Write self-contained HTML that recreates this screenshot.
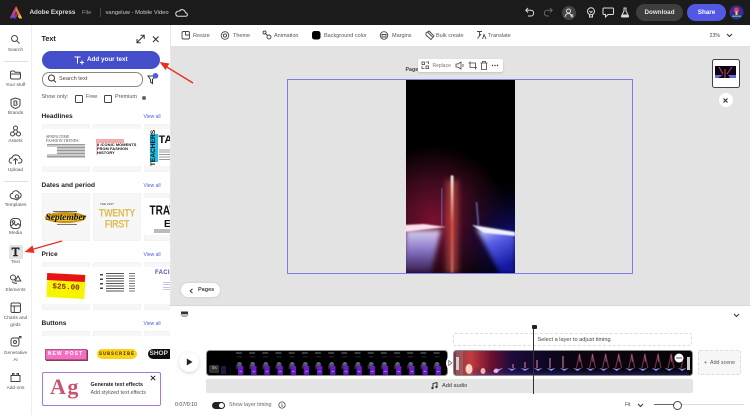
<!DOCTYPE html>
<html><head><meta charset="utf-8"><style>
html,body{margin:0;padding:0;width:750px;height:415px;overflow:hidden;background:#fff;font-family:"Liberation Sans",sans-serif;color:#333}
#r{position:relative;width:750px;height:415px;overflow:hidden;filter:blur(.3px)}
.a{position:absolute}
.t{position:absolute;white-space:nowrap;line-height:8px;font-size:5.6px;color:#555}
.c{transform:translateX(-50%);text-align:center}
.h{font-weight:700;font-size:6.6px;color:#222}
.v{font-size:5px;color:#5258e4}
.card{position:absolute;background:#f7f7f7;border-radius:2px;overflow:hidden;box-shadow:inset 0 0 0 .5px #eee}
svg{position:absolute;overflow:visible}
.i{fill:none;stroke:#444;stroke-width:1}
.w{fill:none;stroke:#ddd;stroke-width:1}
</style></head><body><div id="r">
<!-- top bar -->
<div class="a" style="left:0;top:0;width:750px;height:25px;background:#1b1b1b"></div>
<svg style="left:9px;top:6px" width="14" height="13" viewBox="0 0 14 13"><path d="M7 0L1 11.5H4.5L7 5Z" fill="#e8416a"/><path d="M7 0L13 11.5H10L7 5Z" fill="#f0782a"/><path d="M4 12.5L7 6.5L8.5 9.5L6.5 12.5Z" fill="#3c4fe0"/><path d="M1 12.5L3.6 7.5H5L2.5 12.5Z" fill="#7a3ce0"/><path d="M8.8 10L10.2 12.5H13L11.4 9Z" fill="#f6c12a"/></svg>
<div class="t" style="left:29.5px;top:8.5px;color:#ddd;font-size:6.3px;font-weight:700">Adobe Express</div>
<div class="t" style="left:82px;top:8.5px;color:#999;font-size:5.8px">File</div>
<div class="a" style="left:99.5px;top:8px;width:1px;height:9px;background:#444"></div>
<div class="t" style="left:105.5px;top:8.5px;color:#ccc;font-size:5.8px">vangeluw - Mobile Video</div>
<svg style="left:175px;top:8px" width="13" height="9" viewBox="0 0 13 9"><path class="w" d="M3 8.3H10.5C13 8.3 13 5 10.5 4.8C10 1.5 6 .5 4.8 3C2.5 2.8 .5 4 .8 6C1 7.5 2 8.3 3 8.3Z"/></svg>
<svg style="left:525px;top:7px" width="28" height="11" viewBox="0 0 28 11"><path class="w" d="M3 1L.8 3.3L3 5.5M1 3.3H6C9.5 3.3 9.5 9 6 9H3"/><path d="M25 1L27.2 3.3L25 5.5M27 3.3H22C18.5 3.3 18.5 9 22 9H24" fill="none" stroke="#666" stroke-width="1"/></svg>
<div class="a" style="left:562px;top:6px;width:14px;height:14px;border-radius:50%;background:#444"></div>
<svg style="left:564px;top:8px" width="10" height="10" viewBox="0 0 10 10"><circle class="w" cx="4.5" cy="3" r="2"/><path class="w" d="M1 9C1.5 6 3 5.5 4.5 5.5C6 5.5 7 6.5 7.5 8M8 6V9.5M6.5 8H9.5"/></svg>
<svg style="left:586px;top:7px" width="10" height="11" viewBox="0 0 10 11"><circle class="w" cx="5" cy="4.3" r="3.5"/><path class="w" d="M3.5 8V10H6.5V8M3.5 4L5 5.5L6.5 4"/></svg>
<svg style="left:602px;top:7px" width="12" height="11" viewBox="0 0 12 11"><path class="w" d="M2 1H10.5Q11.5 1 11.5 2V6.5Q11.5 7.5 10.5 7.5H6L3.5 10V7.5H2Q1 7.5 1 6.5V2Q1 1 2 1Z"/></svg>
<svg style="left:620px;top:7px" width="10" height="11" viewBox="0 0 10 11"><path class="w" d="M3.5 1H6.5M4 1V4L1.5 9Q1.3 10 2.3 10H7.7Q8.7 10 8.5 9L6 4V1"/><path d="M2.5 7.5H7.5L8 9.5H2Z" fill="#ddd"/></svg>
<div class="a" style="left:636px;top:4px;width:47px;height:17px;border-radius:9px;background:#3e3e3e"></div>
<div class="t c" style="left:659.5px;top:8.5px;color:#e2e2e2;font-size:6.3px;font-weight:700">Download</div>
<div class="a" style="left:687px;top:4px;width:39px;height:17px;border-radius:9px;background:#5258e4"></div>
<div class="t c" style="left:706.5px;top:8.5px;color:#fff;font-size:6.3px;font-weight:700">Share</div>
<svg style="left:729px;top:5px" width="15" height="15" viewBox="0 0 15 15"><circle cx="7.5" cy="7.5" r="7" fill="#3b2a9c"/><circle cx="7.5" cy="5" r="2.5" fill="#e0405a"/><path d="M6.5 6H8.5V10H6.5Z" fill="#f2d24a"/><path d="M3 10.5H12V12H3Z" fill="#35c06a"/></svg>

<!-- left rail -->
<div class="a" style="left:31px;top:25px;width:1px;height:390px;background:#eee"></div>
<div class="a" style="left:4px;top:60.5px;width:24px;height:.7px;background:#ddd"></div>
<div class="a" style="left:4px;top:180.5px;width:24px;height:.7px;background:#ddd"></div>
<div class="a" style="left:9px;top:245px;width:13.5px;height:13.5px;border-radius:2px;background:#e4e4e4"></div>
<svg style="left:0;top:0" width="32" height="415" viewBox="0 0 32 415">
<g class="i">
<circle cx="14.5" cy="38.5" r="3"/><path d="M16.7 40.7L19.5 43.5"/>
<path d="M10.5 72.5Q10.5 71 12 71H14L15 72.3H19Q20.5 72.3 20.5 73.8V77.5Q20.5 79 19 79H12Q10.5 79 10.5 77.5ZM10.5 74H20.5"/>
<path d="M11 99.5L15.5 98L20 99.5V104.5Q20 107 15.5 108.5Q11 107 11 104.5Z"/><path d="M14 101H16.5Q17.5 102.3 16.3 103Q17.8 104 16.5 105.3H14Z"/>
<circle cx="15.5" cy="128" r="2"/><circle cx="12.5" cy="134" r="2"/><circle cx="18.5" cy="134" r="2"/><path d="M14.5 129.7L13.3 132M16.5 129.7L17.7 132M14.5 134H16.5"/>
<path d="M12 163H10.8Q8.5 162.5 9.5 159.5Q10.5 157.5 12 158Q13 154.5 16.5 155Q19.5 155.5 20 158.5Q22.5 159 21.8 161.5Q21.3 163 19.5 163H18M15.5 164.5V158.5M13.3 160.5L15.5 158.5L17.7 160.5"/>
<path d="M12 198.5C9 197 10 193 12.5 193.5C13 190 18 190 19 193C21.5 193 22 196.5 19.5 198L17 200L15 199Z"/><circle cx="17" cy="196.5" r="1.7"/>
<rect x="10.5" y="218.5" width="10" height="10" rx="3.5"/><circle cx="13.5" cy="222" r="1.3"/><path d="M11 226L14 223.5L16 225.5L18 223.5L20.5 226"/>
<circle cx="13" cy="277.5" r="2.5"/><path d="M15 281L18 276L20.8 281Z"/><path d="M12 281.5Q14 284 17 283"/>
<rect x="11" y="303" width="9.5" height="9.5" rx="1.5"/><path d="M11 306H20.5M14.3 306V312.5"/>
<rect x="11" y="338" width="8" height="8" rx="2"/><circle cx="15" cy="342" r="1.5"/><path d="M18 339L20.5 336.5M19 336.5H21V338.5"/>
<path d="M11 375.5H20V381.5H11ZM12.5 375.5V373.5H14V375.5M17 375.5V373.5H18.5V375.5"/>
</g>
<path d="M11.5 247.5H19.5V249.8H18.5L18 248.8H16.5V255H17.8V256.3H13.2V255H14.5V248.8H13L12.5 249.8H11.5Z" fill="#222"/>
</svg>
<div class="t c" style="left:15.5px;top:46.5px;font-size:4.8px">Search</div>
<div class="t c" style="left:15.5px;top:82px;font-size:4.8px">Your stuff</div>
<div class="t c" style="left:15.5px;top:110px;font-size:4.8px">Brands</div>
<div class="t c" style="left:15.5px;top:138px;font-size:4.8px">Assets</div>
<div class="t c" style="left:15.5px;top:166.5px;font-size:4.8px">Upload</div>
<div class="t c" style="left:15.5px;top:202px;font-size:4.8px">Templates</div>
<div class="t c" style="left:15.5px;top:230px;font-size:4.8px">Media</div>
<div class="t c" style="left:15.5px;top:258.5px;font-size:4.8px">Text</div>
<div class="t c" style="left:15.5px;top:286.5px;font-size:4.8px">Elements</div>
<div class="t c" style="left:15.5px;top:315px;font-size:4.8px">Charts and</div>
<div class="t c" style="left:15.5px;top:321.5px;font-size:4.8px">grids</div>
<div class="t c" style="left:15.5px;top:350px;font-size:4.8px">Generative</div>
<div class="t c" style="left:15.5px;top:356.5px;font-size:4.8px">AI</div>
<div class="t c" style="left:15.5px;top:384.5px;font-size:4.8px">Add-ons</div>

<!-- panel -->
<div class="t" style="left:41.5px;top:35px;font-size:7.2px;font-weight:700;color:#222">Text</div>
<svg style="left:136px;top:34px" width="25" height="10" viewBox="0 0 25 10"><path d="M1 8.5L8 1.5M4.5 1.3H8.2V5M1 5V8.7H4.7" fill="none" stroke="#333" stroke-width="1"/><path d="M17 2.5L22.5 8M22.5 2.5L17 8" fill="none" stroke="#333" stroke-width="1.1"/></svg>
<div class="a" style="left:41.5px;top:51px;width:118.5px;height:18px;border-radius:9px;background:#444ecb"></div>
<svg style="left:74px;top:56px" width="10" height="9" viewBox="0 0 10 9"><path d="M.5 1H6.5M3.5 1V7.5M8 4.5V8.5M6 6.5H10" fill="none" stroke="#fff" stroke-width="1"/></svg>
<div class="t" style="left:87px;top:56px;color:#fff;font-size:6.3px;font-weight:700">Add your text</div>
<div class="a" style="left:42px;top:72px;width:99px;height:12.5px;border-radius:7px;border:.8px solid #888;background:#fff"></div>
<svg style="left:47px;top:74px" width="10" height="10" viewBox="0 0 10 10"><circle cx="4.5" cy="4" r="3" fill="none" stroke="#333"/><path d="M6.7 6.2L9 8.5" stroke="#333"/></svg>
<div class="t" style="left:59px;top:74.5px;font-size:5.6px;color:#444">Search text</div>
<svg style="left:146px;top:73px" width="14" height="12" viewBox="0 0 14 12"><path d="M2 3H9L6.5 6.5V10.5L4.5 9V6.5Z" fill="none" stroke="#333"/><circle cx="9.5" cy="2.8" r="2.8" fill="#5258e4"/></svg>
<div class="t" style="left:41.5px;top:93px;font-size:5.5px;color:#555">Show only:</div>
<div class="a" style="left:74.5px;top:94.5px;width:6px;height:6px;border:.9px solid #444;border-radius:1.2px"></div>
<div class="t" style="left:86px;top:93px;font-size:5.5px;color:#555">Free</div>
<div class="a" style="left:103.5px;top:94.5px;width:6px;height:6px;border:.9px solid #444;border-radius:1.2px"></div>
<div class="t" style="left:115px;top:93px;font-size:5.5px;color:#555">Premium</div>
<div class="a" style="left:141.5px;top:96px;width:4px;height:4px;border-radius:50%;background:#666"></div>

<div class="t h" style="left:41.5px;top:112.5px">Headlines</div><div class="t v" style="left:143.5px;top:113px">View all</div>
<div class="t h" style="left:41.5px;top:181.5px">Dates and period</div><div class="t v" style="left:143.5px;top:181.5px">View all</div>
<div class="t h" style="left:41.5px;top:250.5px">Price</div><div class="t v" style="left:143.5px;top:250.5px">View all</div>
<div class="t h" style="left:41.5px;top:319.5px">Buttons</div><div class="t v" style="left:143.5px;top:319.5px">View all</div>

<!-- headline cards -->
<div class="card" style="left:41.5px;top:124px;width:48px;height:48px"><div class="a" style="left:0;top:5px;width:48px;height:37px;background:#fff"></div>
<div class="t" style="left:4.5px;top:10.5px;font:3.9px/4.2px 'Liberation Serif',serif;color:#555;white-space:normal;width:42px">SPRINGTIME<br>FASHION TRENDS</div>
<div class="a" style="left:5px;top:20px;width:38px;height:14px;background:repeating-linear-gradient(#999 0 .8px,#fff .8px 1.5px)"></div><div class="a" style="left:5px;top:23px;width:10px;height:7px;background:#fff"></div></div>
<div class="card" style="left:93px;top:124px;width:48px;height:48px"><div class="a" style="left:0;top:5px;width:48px;height:37px;background:#fff"></div>
<div class="a" style="left:3px;top:15px;width:28px;height:3.5px;background:#f8a9a9"></div><div class="a" style="left:3px;top:18.5px;width:1.5px;height:12px;background:#fbc9c9"></div>
<div class="t" style="left:4px;top:18.5px;font:700 3.9px/4.1px 'Liberation Sans',sans-serif;color:#111;white-space:normal;width:44px;letter-spacing:.1px">8 ICONIC MOMENTS<br>FROM FASHION<br>HISTORY</div></div>
<div class="card" style="left:144px;top:124px;width:26px;height:48px"><div class="a" style="left:0;top:5px;width:26px;height:37px;background:#fff"></div>
<div class="a" style="left:5.5px;top:10px;width:8px;height:28px;background:#21bfe8"></div>
<div class="t c" style="left:9.5px;top:20px;font:900 6.6px/8px 'Liberation Sans',sans-serif;color:#111;transform:translateX(-50%) rotate(-90deg)">TEACHERS</div>
<div class="t" style="left:14.5px;top:10px;font:700 11px/12px 'Liberation Sans',sans-serif;color:#111">TA</div>
<div class="a" style="left:15px;top:25px;width:11px;height:12px;background:repeating-linear-gradient(#999 0 .7px,#fff .7px 1.7px)"></div></div>
<!-- dates -->
<div class="card" style="left:41.5px;top:193px;width:48px;height:48px">
<div class="a" style="left:3.5px;top:19px;width:41px;height:11px;border-radius:50%;background:#c99512"></div>
<div class="a" style="left:8px;top:21.5px;width:33px;height:6px;border-radius:50%;background:#f3c63a"></div>
<div class="t" style="left:4px;top:20px;font:italic 700 9.6px/9px 'Liberation Serif',serif;color:#111;letter-spacing:-.1px">September</div>
<div class="a" style="left:11px;top:17.5px;width:24px;height:1px;background:#666"></div><div class="a" style="left:15px;top:30.5px;width:20px;height:1px;background:#777"></div></div>
<div class="card" style="left:93px;top:193px;width:48px;height:48px">
<div class="t c" style="left:24px;top:15px;font:700 9px/10px 'Liberation Sans',sans-serif;color:#dcbd55;letter-spacing:-.3px;transform:translateX(-50%) scaleY(1.2)">TWENTY</div>
<div class="t c" style="left:24px;top:25.5px;font:700 9px/10px 'Liberation Sans',sans-serif;color:#dcbd55;letter-spacing:-.3px;transform:translateX(-50%) scaleY(1.2)">FIRST</div>
<div class="t" style="left:7px;top:7px;font-size:3px;color:#333">THE 21ST</div></div>
<div class="card" style="left:144px;top:193px;width:26px;height:48px"><div class="a" style="left:0;top:5px;width:26px;height:37px;background:#fff"></div>
<div class="t" style="left:5.5px;top:11px;font:700 10px/12px 'Liberation Sans',sans-serif;color:#111;transform:scaleY(1.3);transform-origin:0 0">TRAV</div>
<div class="t" style="left:20px;top:26px;font:700 10px/11px 'Liberation Sans',sans-serif;color:#111">E</div><div class="a" style="left:10px;top:36px;width:16px;height:3.5px;background:#bbb"></div></div>
<!-- price -->
<div class="card" style="left:41.5px;top:262px;width:48px;height:48px"><div class="a" style="left:0;top:5px;width:48px;height:37px;background:#fff"></div>
<div class="a" style="left:5px;top:12px;width:38px;height:24px;background:#f7f400;transform:rotate(3deg)"></div>
<div class="a" style="left:5px;top:11.5px;width:38px;height:7px;background:#e81118;transform:rotate(3deg)"></div>
<div class="t c" style="left:24px;top:22px;font:700 7.6px/8px 'Liberation Mono',monospace;color:#8a2a1a;transform:translateX(-50%) rotate(3deg)">$25.00</div></div>
<div class="card" style="left:93px;top:262px;width:48px;height:48px"><div class="a" style="left:0;top:5px;width:48px;height:37px;background:#fff"></div>
<div class="a" style="left:13px;top:11px;width:18px;height:20px;background:repeating-linear-gradient(#555 0 1px,#fff 1px 2.5px)"></div>
<div class="a" style="left:36px;top:11px;width:6px;height:20px;background:repeating-linear-gradient(#777 0 1px,#fff 1px 2.5px)"></div>
<div class="a" style="left:6.5px;top:12px;width:3px;height:17px;background:repeating-linear-gradient(#444 0 1.5px,#fff 1.5px 4.5px)"></div></div>
<div class="card" style="left:144px;top:262px;width:26px;height:48px"><div class="a" style="left:0;top:5px;width:26px;height:37px;background:#fff"></div>
<div class="t" style="left:11px;top:7px;font:700 6px/8px 'Liberation Sans',sans-serif;color:#4f55a8;letter-spacing:.3px">FACIA</div>
<div class="a" style="left:19px;top:20px;width:7px;height:10px;background:repeating-linear-gradient(#8a8ed0 0 .7px,#fff .7px 2.5px)"></div></div>
<!-- buttons -->
<div class="card" style="left:41.5px;top:331px;width:48px;height:35px"><div class="a" style="left:0;top:5px;width:48px;height:30px;background:#fff"></div>
<div class="a" style="left:3.5px;top:17.5px;width:39.5px;height:9px;background:#f56fc2;box-shadow:1px 1px 0 #8a3a55;border:.5px solid #b05580"></div>
<div class="t c" style="left:24px;top:19px;font:700 5px/8px 'Liberation Sans',sans-serif;color:#fff;letter-spacing:1.1px">NEW POST</div></div>
<div class="card" style="left:93px;top:331px;width:48px;height:35px"><div class="a" style="left:0;top:5px;width:48px;height:30px;background:#fff"></div>
<div class="a" style="left:3.5px;top:18px;width:40.5px;height:9.5px;border-radius:5px;background:#fbd118"></div>
<div class="t c" style="left:24px;top:19px;font:700 5px/8px 'Liberation Mono',monospace;color:#4d3d00;letter-spacing:1px">SUBSCRIBE</div></div>
<div class="card" style="left:144px;top:331px;width:26px;height:35px"><div class="a" style="left:0;top:5px;width:26px;height:30px;background:#fff"></div>
<div class="a" style="left:4px;top:18px;width:30px;height:9.5px;border-radius:5px;background:#0b0b0b"></div>
<div class="t" style="left:5.5px;top:19px;font:700 6.5px/8px 'Liberation Sans',sans-serif;color:#ddd">SHOP</div></div>
<div class="a" style="left:32px;top:366px;width:138px;height:49px;background:#fff"></div>
<!-- promo -->
<div class="a" style="left:41.5px;top:372px;width:117px;height:32px;border:1px solid #a877dc;border-radius:2px;background:#fff"></div>
<div class="t" style="left:50px;top:373px;font:700 22px/28px 'Liberation Serif',serif;color:#c8546f;letter-spacing:1.5px">Ag</div>
<div class="t" style="left:90.5px;top:380.5px;font-size:5.3px;font-weight:700;color:#222">Generate text effects</div>
<div class="t" style="left:90.5px;top:389px;font-size:5.3px;color:#555">Add stylized text effects</div>
<svg style="left:150px;top:375px" width="6" height="6" viewBox="0 0 6 6"><path d="M.8.8L5.2 5.2M5.2.8L.8 5.2" stroke="#222" stroke-width="1"/></svg>

<!-- toolbar -->
<div class="a" style="left:170px;top:25px;width:580px;height:21px;background:#fff"></div>
<div class="a" style="left:170px;top:46px;width:580px;height:259px;background:#e3e3e3"></div>
<div class="a" style="left:170px;top:25px;width:1px;height:390px;background:#e8e8e8"></div>
<svg style="left:175px;top:25px" width="340" height="21" viewBox="0 0 340 21"><g fill="none" stroke="#444" stroke-width=".9">
<rect x="7" y="6.5" width="7.5" height="7.5" rx="1.5"/><path d="M10.5 6.5V10H14.5"/>
<circle cx="50" cy="10.5" r="3.8"/><circle cx="50" cy="10.5" r="1.6"/>
<circle cx="89.5" cy="7.5" r="1.5"/><circle cx="94" cy="12" r="2"/><path d="M90.5 8.5L92.5 10.5"/>
<circle cx="209" cy="10.5" r="3.8"/><path d="M207 9.5H211V12H207Z"/>
<path d="M251 8L254 6L259 11L256 14.5L251 10Z"/><path d="M252.5 7L257.5 12"/>
<path d="M302 6.5H307M304.5 6.5V11M302.5 13.5L306 9M311 14L309 9.5L307.5 14"/>
</g><rect x="137" y="6" width="8.5" height="8.5" rx="2.5" fill="#000"/></svg>
<div class="t" style="left:193px;top:31.5px;font-size:5.5px">Resize</div>
<div class="t" style="left:233px;top:31.5px;font-size:5.5px">Theme</div>
<div class="t" style="left:274px;top:31.5px;font-size:5.5px">Animation</div>
<div class="t" style="left:324px;top:31.5px;font-size:5.5px">Background color</div>
<div class="t" style="left:392px;top:31.5px;font-size:5.5px">Margins</div>
<div class="t" style="left:436px;top:31.5px;font-size:5.5px">Bulk create</div>
<div class="t" style="left:488px;top:31.5px;font-size:5.5px">Translate</div>
<div class="t" style="left:709.5px;top:31.5px;font-size:5.3px;color:#444">23%</div>
<svg style="left:726px;top:33px" width="7" height="5" viewBox="0 0 7 5"><path d="M1 1L3.5 3.5L6 1" fill="none" stroke="#333"/></svg>

<!-- canvas -->
<div class="a" style="left:287px;top:79px;width:343.5px;height:192.5px;border:1px solid #7b7de8"></div>
<div class="t" style="left:405.5px;top:66px;font-size:5.3px;font-weight:700;color:#444">Page</div>
<svg style="left:405.5px;top:80px;overflow:hidden" width="109" height="193" viewBox="0 0 109 193">
<defs>
<radialGradient id="g1" gradientUnits="userSpaceOnUse" cx="28" cy="140" r="75"><stop offset="0" stop-color="#7a1030"/><stop offset=".5" stop-color="#3e0a1e"/><stop offset="1" stop-color="#000"/></radialGradient>
<linearGradient id="g2" x1="0" y1="0" x2="0" y2="1"><stop offset="0" stop-color="#d8d0f0"/><stop offset=".45" stop-color="#8a78c8"/><stop offset="1" stop-color="#30184a"/></linearGradient>
<linearGradient id="g3" x1="0" y1="0" x2=".4" y2="1"><stop offset="0" stop-color="#d8d8fa"/><stop offset=".4" stop-color="#5a62e8"/><stop offset="1" stop-color="#1218a0"/></linearGradient>
<radialGradient id="g4" gradientUnits="userSpaceOnUse" cx="109" cy="160" r="70"><stop offset="0" stop-color="#14108a"/><stop offset="1" stop-color="#000" stop-opacity="0"/></radialGradient>
<linearGradient id="g5" x1="0" y1="0" x2="0" y2="1"><stop offset="0" stop-color="#fff"/><stop offset=".15" stop-color="#f6c8b0"/><stop offset=".5" stop-color="#d84a3a"/><stop offset="1" stop-color="#b86060"/></linearGradient>
<filter id="b0" x="-30%" y="-30%" width="160%" height="160%"><feGaussianBlur stdDeviation="2.5"/></filter>
<filter id="b1" x="-100%" y="-30%" width="300%" height="160%"><feGaussianBlur stdDeviation="3"/></filter>
<filter id="b2" x="-100%" y="-20%" width="300%" height="140%"><feGaussianBlur stdDeviation=".7"/></filter>
</defs>
<rect width="109" height="193" fill="#000"/><rect width="109" height="193" fill="url(#g1)"/><rect width="109" height="193" fill="url(#g4)"/>
<rect x="40" y="100" width="12" height="93" fill="#d85a50" opacity=".55" filter="url(#b1)"/>
<path d="M0 150L35 150L25 193H-3Z" fill="url(#g2)" filter="url(#b0)"/>
<path d="M70 148L109 154V193H94Z" fill="url(#g3)" filter="url(#b0)"/>
<path d="M-2 145L18 144L40 147L-2 152Z" fill="#ffe0ec" filter="url(#b2)"/>
<path d="M66 145L109 152L109 156L78 153Z" fill="#f0f0ff" filter="url(#b2)"/>
<rect x="44.8" y="95.5" width="2.6" height="97" fill="url(#g5)" filter="url(#b2)"/>
<path d="M36 108L35.5 146" stroke="#7f8ae8" stroke-width="1" filter="url(#b2)"/>
<path d="M70.5 122L72.5 146" stroke="#8d90e0" stroke-width="1" filter="url(#b2)"/>
</svg>
<div class="a" style="left:418px;top:58.5px;width:85px;height:13.5px;background:#fff;border-radius:2px;box-shadow:0 1px 2px rgba(0,0,0,.15)"></div>
<svg style="left:420px;top:60px" width="82" height="11" viewBox="0 0 82 11"><g fill="none" stroke="#444" stroke-width=".8"><rect x="2" y="2" width="2.5" height="2.5"/><rect x="6" y="6" width="2.5" height="2.5"/><path d="M6 2H8.5V4M4.5 8.5H2V6"/><path d="M36 4H38L41 2V9L38 7H36ZM43 4V7"/><path d="M50 1.5V7.5H57M48.5 3H55.5V9.5"/><path d="M60.5 3H67.5M61.5 3V9.5H66.5V3M62.5 3V1.5H65.5V3"/></g><circle cx="72.5" cy="5.5" r=".7" fill="#333"/><circle cx="75" cy="5.5" r=".7" fill="#333"/><circle cx="77.5" cy="5.5" r=".7" fill="#333"/></svg>
<div class="t" style="left:432.5px;top:61.5px;font-size:5px;color:#777">Replace</div>
<!-- thumbnail -->
<div class="a" style="left:712px;top:58.5px;width:26px;height:27px;border:.8px solid #444;border-radius:2.5px;background:#fff"></div>
<svg style="left:715px;top:66px" width="21" height="13" viewBox="0 0 21 13"><rect width="21" height="12" fill="#0b0414"/><path d="M10 3V12" stroke="#c05060"/><path d="M0 9H8L3 12H0ZM13 9H21V12H15Z" fill="#6a66e0"/><path d="M4 1L8 8M17 1L12 8" stroke="#d0406a"/></svg>
<div class="a" style="left:718.5px;top:93px;width:14px;height:14px;border-radius:50%;background:#fff"></div>
<svg style="left:723px;top:97.5px" width="5" height="5" viewBox="0 0 5 5"><path d="M.5.5L4.5 4.5M4.5.5L.5 4.5" stroke="#222"/></svg>
<!-- pages -->
<div class="a" style="left:181px;top:283px;width:38.5px;height:14px;background:#fff;border-radius:7px;box-shadow:0 0 2px rgba(0,0,0,.15)"></div>
<svg style="left:188.5px;top:287.5px" width="5" height="6" viewBox="0 0 5 6"><path d="M3.5.8L1.2 3L3.5 5.2" fill="none" stroke="#333"/></svg>
<div class="t" style="left:198px;top:286px;font-size:5.5px;font-weight:700;color:#444">Pages</div>

<!-- timeline -->
<div class="a" style="left:170px;top:305px;width:580px;height:110px;background:#fff;border-top:.8px solid #d8d8d8;box-sizing:border-box"></div>
<svg style="left:180px;top:311px" width="9" height="7" viewBox="0 0 9 7"><rect x="1" y=".5" width="7" height="2.5" fill="#333"/><rect x=".5" y="3.5" width="8" height="1" fill="#777"/><rect x="2" y="5" width="5" height="1" fill="#aaa"/></svg>
<svg style="left:733px;top:313px" width="7" height="5" viewBox="0 0 7 5"><path d="M1 1L3.5 3.5L6 1" fill="none" stroke="#333"/></svg>
<div class="a" style="left:453px;top:332.5px;width:239px;height:13px;border:.7px dashed #ddd;border-radius:2px;box-sizing:border-box"></div>
<div class="t" style="left:537.5px;top:335.5px;font-size:5.6px;color:#444">Select a layer to adjust timing</div>
<div class="a" style="left:179px;top:352px;width:20px;height:20px;border-radius:50%;background:#fff;box-shadow:0 1px 3px rgba(0,0,0,.18)"></div>
<svg style="left:185.5px;top:358px" width="7" height="8" viewBox="0 0 7 8"><path d="M.8.5L6.5 4L.8 7.5Z" fill="#222"/></svg>
<!-- clip 1 -->
<svg style="left:205.5px;top:349.5px" width="242" height="26" viewBox="0 0 242 26">
<defs><pattern id="p1" x="30" y="0" width="13.17" height="26" patternUnits="userSpaceOnUse">
<rect x="0" y="2.5" width="6" height="1" fill="#77778a"/><rect x="1" y="6.5" width="5" height=".7" fill="#3a3a3a"/>
<circle cx="3.5" cy="14.5" r="2.5" fill="#555"/><path d="M1.5 13.5Q3.5 11 5.5 13.5Z" fill="#4c7ee0"/><circle cx="0" cy="17" r="2.2" fill="#333"/>
<rect x="2" y="16" width="5.3" height="8.8" fill="#6a1cc8"/><rect x="3.5" y="21" width="2.5" height=".8" fill="#b090e0"/>
</pattern></defs>
<rect x=".5" y=".5" width="241" height="25" rx="3" fill="#000" stroke="#8c8c8c"/>
<rect x="24" y="2" width="215" height="23" fill="url(#p1)"/>
<rect x="3" y="15" width="10" height="8" rx="1" fill="#333"/><rect x="15" y="16" width="5" height="8" fill="#2c1246"/>
</svg>
<div class="t" style="left:212px;top:364px;font-size:4.5px;color:#ccc">5s</div>
<div class="a" style="left:446px;top:356.5px;width:8px;height:12px;background:#fff;border-radius:50%"></div>
<svg style="left:448px;top:359.5px" width="5" height="6" viewBox="0 0 5 6"><path d="M.8.5L4 3L.8 5.5Z" fill="none" stroke="#555" stroke-width=".7"/></svg>
<!-- clip 2 -->
<svg style="left:453px;top:349.5px" width="240" height="26" viewBox="0 0 240 26">
<defs><linearGradient id="cl" x1="0" x2="1" y1="0" y2="0"><stop offset="0" stop-color="#6d4048"/><stop offset=".07" stop-color="#c43c40"/><stop offset=".16" stop-color="#6a1030"/><stop offset=".24" stop-color="#1e0a3c"/><stop offset=".38" stop-color="#0e0724"/><stop offset=".5" stop-color="#0c0410"/><stop offset="1" stop-color="#080308"/></linearGradient>
<linearGradient id="cb" x1="0" x2="0" y1="0" y2="1"><stop offset=".65" stop-color="#000" stop-opacity="0"/><stop offset="1" stop-color="#3a45c0" stop-opacity=".4"/></linearGradient>
<pattern id="p2" x="0" y="0" width="13.1" height="26" patternUnits="userSpaceOnUse"><path d="M2 18L6.5 19L11 18L6.5 21Z" fill="#8a95f0"/></pattern>
<pattern id="p3" x="2" y="0" width="13.1" height="26" patternUnits="userSpaceOnUse"><path d="M3.5 18L6.5 4L9.5 18" fill="none" stroke="#7a3a55" stroke-width="1"/><path d="M6.5 4L7 12" stroke="#c07088" stroke-width=".7"/></pattern>
</defs>
<rect x=".5" y=".5" width="239" height="25" rx="3" fill="url(#cl)" stroke="#8c8c8c"/>
<rect x="20" y="2" width="216" height="23" fill="url(#cb)"/>
<rect x="40" y="2" width="198" height="22" fill="url(#p2)"/>
<rect x="118" y="2" width="112" height="18" fill="url(#p3)"/>
<path d="M60 18V14M72 18V12M84 18V10M97 18V8M110 18V6" stroke="#c88090" stroke-width="1.1"/>
<ellipse cx="16" cy="19" rx="3.5" ry="5" fill="#ffd6c0"/><ellipse cx="30" cy="21" rx="2.5" ry="3" fill="#f8b0b0"/><ellipse cx="43" cy="21" rx="2.5" ry="2" fill="#f4b0e8"/>
<rect x="3" y="7" width="3" height="13" fill="#ccc"/><rect x="234" y="7" width="3" height="13" fill="#ccc"/>
<rect x="3" y="1" width="7" height="24" fill="#fff" opacity=".12"/>
<circle cx="226" cy="8" r="4.5" fill="#fff"/><circle cx="224" cy="8" r=".7" fill="#333"/><circle cx="226" cy="8" r=".7" fill="#333"/><circle cx="228" cy="8" r=".7" fill="#333"/>
</svg>
<div class="a" style="left:697.5px;top:349.5px;width:43px;height:25px;background:#f7f7f7;border:.7px dashed #ddd;border-radius:2px;box-sizing:border-box"></div>
<div class="t" style="left:704px;top:358.5px;font-size:5.3px;color:#555">+ &nbsp;Add scene</div>
<!-- audio -->
<div class="a" style="left:205.5px;top:379px;width:487.5px;height:13.5px;background:#e5e5e5;border-radius:2px"></div>
<svg style="left:431px;top:381px" width="9" height="9" viewBox="0 0 9 9"><path d="M2 7V2.5L6 1.5V6" fill="none" stroke="#333"/><circle cx="1.5" cy="7" r="1.2" fill="#333"/><circle cx="5.5" cy="6" r="1.2" fill="#333"/></svg>
<div class="t" style="left:442px;top:381.5px;font-size:5.6px;color:#333">Add audio</div>
<!-- playhead -->
<div class="a" style="left:533px;top:328px;width:1px;height:66px;background:#333"></div>
<div class="a" style="left:531.5px;top:324.5px;width:5px;height:4.5px;background:#222;border-radius:1px"></div>
<!-- bottom -->
<div class="t" style="left:175px;top:400.5px;font-size:5.3px;color:#444">0:07/0:10</div>
<div class="a" style="left:212px;top:401.5px;width:12.5px;height:7px;border-radius:4px;background:#222"></div>
<div class="a" style="left:218.5px;top:402.5px;width:5px;height:5px;border-radius:50%;background:#fff"></div>
<div class="t" style="left:229px;top:400.5px;font-size:5.4px;color:#666">Show layer timing</div>
<svg style="left:278px;top:401px" width="8" height="8" viewBox="0 0 8 8"><circle cx="4" cy="4" r="3.2" fill="none" stroke="#333" stroke-width=".7"/><path d="M4 3.3V6M4 2V2.8" stroke="#333" stroke-width=".7"/></svg>
<div class="t" style="left:625px;top:400.5px;font-size:5px;color:#444">Fit</div>
<svg style="left:637px;top:402.5px" width="7" height="5" viewBox="0 0 7 5"><path d="M1 1L3.5 3.5L6 1" fill="none" stroke="#333"/></svg>
<div class="a" style="left:653.5px;top:404px;width:90px;height:1px;background:#ddd"></div>
<div class="a" style="left:653.5px;top:404px;width:20px;height:1px;background:#666"></div>
<div class="a" style="left:672.5px;top:400.5px;width:7px;height:7px;border-radius:50%;border:.9px solid #444;background:#fff"></div>
<!-- arrows -->
<svg style="left:0;top:0" width="750" height="415" viewBox="0 0 750 415"><path d="M193 83L166 66.5" stroke="#e8301e" stroke-width="1.4" fill="none"/><path d="M159.5 62L169.5 63.5L165.5 70Z" fill="#e8301e"/><path d="M62 241L32 249.5" stroke="#e8301e" stroke-width="1.4" fill="none"/><path d="M24.5 252L32.5 245.5L34.5 253Z" fill="#e8301e"/></svg>
</div></body></html>
